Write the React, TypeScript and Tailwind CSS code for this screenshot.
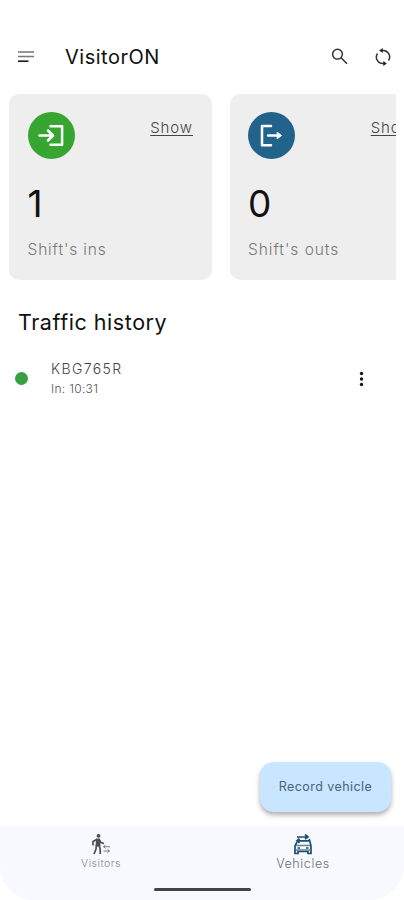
import { useState } from "react";
import type { ReactNode } from "react";

type Entry = { plate: string; time: string };

const entries: Entry[] = [{ plate: "KBG765R", time: "10:31" }];

export default function App() {
  const [tab, setTab] = useState("vehicles");

  return (
    <main className="flex h-[900px] w-[404px] flex-col overflow-hidden bg-white font-['Inter',sans-serif] text-[#111]">
      <header className="mt-[37px] flex h-10 items-center pr-3 pl-[18px]">
        <button aria-label="Menu">
          <MenuIcon />
        </button>
        <h1 className="ml-[31px] text-[20px] leading-10 tracking-[0.5px]">VisitorON</h1>
        <button aria-label="Search" className="ml-auto">
          <SearchIcon />
        </button>
        <button aria-label="Refresh" className="ml-[25px]">
          <SyncIcon />
        </button>
      </header>

      <section className="mt-[17px] mr-2 ml-[9px] flex gap-[18px] overflow-hidden">
        <StatCard label="Shift's ins" value={1} color="bg-[#36a631]" tracking="tracking-[0.85px]">
          <path d="M22.500 14.200h11.600v18.600H22.500M11.500 23.500h13M20 18.500l5 5-5 5" />
        </StatCard>
        <StatCard label="Shift's outs" value={0} color="bg-[#22638c]" tracking="tracking-[0.95px]">
          <path d="M23 14h-9v19.200h9M20 23.500h10" />
          <path d="M29.500 20.500L33.500 23.500l-4 3z" fill="currentColor" strokeWidth="1" />
        </StatCard>
      </section>

      <section className="mt-[26px]">
        <h2 className="pl-[18px] text-[21.5px] leading-8 tracking-[0.55px]">Traffic history</h2>
        <ul className="mt-[21px]">
          {entries.map((entry) => (
            <li key={entry.plate} className="flex h-10 items-center pr-[38px] pl-[15px]">
              <span className="h-[13px] w-[13px] rounded-full bg-[#37a041]" />
              <div className="ml-[23px] flex flex-col pt-px">
                <span className="text-[14px] leading-5 font-light tracking-[1.4px] text-[#444]">
                  {entry.plate}
                </span>
                <span className="text-[12px] leading-5 font-light tracking-[0.3px] text-[#555]">
                  In: {entry.time}
                </span>
              </div>
              <button aria-label="More" className="ml-auto">
                <MoreIcon />
              </button>
            </li>
          ))}
        </ul>
      </section>

      <button className="mt-auto mr-[13px] mb-[14px] h-[50px] w-[131px] shrink-0 self-end rounded-[14px] bg-[#c8e6ff] text-[12.5px] tracking-[0.45px] text-[#48637a] shadow-[0_3px_5px_rgba(0,0,0,0.32)]">
        Record vehicle
      </button>

      <nav className="flex h-[74px] shrink-0 flex-col items-center rounded-b-[34px] bg-[#f7f9ff]">
        <div className="grid w-full grid-cols-2">
          <NavItem label="Visitors" active={tab === "visitors"} onClick={() => setTab("visitors")}>
            <WalkIcon />
          </NavItem>
          <NavItem label="Vehicles" active={tab === "vehicles"} onClick={() => setTab("vehicles")}>
            <CarIcon />
          </NavItem>
        </div>
        <div className="mt-[16px] h-[3px] w-[97px] rounded-full bg-[#424347]" />
      </nav>
    </main>
  );
}

function StatCard({
  label,
  value,
  color,
  tracking,
  children,
}: {
  label: string;
  value: number;
  color: string;
  tracking: string;
  children: ReactNode;
}) {
  return (
    <article className="h-[185.500px] w-[202.500px] shrink-0 rounded-[10px] bg-[#eee] px-[18.500px] pt-[18px]">
      <div className="flex items-start justify-between">
        <div className={`h-[47px] w-[47px] rounded-full text-white ${color}`}>
          <svg width="47" height="47" viewBox="0 0 47 47" fill="none" stroke="currentColor" strokeWidth="2.500" strokeLinejoin="round" strokeLinecap="round">
            {children}
          </svg>
        </div>
        <a href="#" className="mt-1.5 text-[15px] leading-5 font-light tracking-[0.9px] text-[#444] underline underline-offset-2">
          Show
        </a>
      </div>
      <p className="mt-[25px] text-[37px] leading-10 font-normal">{value}</p>
      <p className={`mt-[16px] text-[15.500px] leading-5 font-light text-[#777] ${tracking}`}>{label}</p>
    </article>
  );
}

function NavItem({
  label,
  active,
  onClick,
  children,
}: {
  label: string;
  active: boolean;
  onClick: () => void;
  children: ReactNode;
}) {
  return (
    <button onClick={onClick} className="flex flex-col items-center pt-[7px]">
      {children}
      <span
        className={`mt-px leading-4 font-light ${
          active ? "text-[12.500px] tracking-[0.6px] text-[#68707a]" : "text-[10.500px] tracking-[0.5px] text-[#858991]"
        }`}
      >
        {label}
      </span>
    </button>
  );
}

function MenuIcon() {
  return (
    <svg width="16" height="12" viewBox="0 0 16 12" fill="none" strokeWidth="1.5">
      <path d="M0 1h16M0 5.500h16" stroke="#777" />
      <path d="M0 10.200h10.500" stroke="#222" strokeWidth="1.700" />
    </svg>
  );
}

function SearchIcon() {
  return (
    <svg width="18" height="18" viewBox="0 0 18 18" fill="none" stroke="#333" strokeWidth="1.500">
      <circle cx="6.500" cy="6.200" r="4.900" />
      <path d="M10 9.800L16 15.800" />
    </svg>
  );
}

function SyncIcon() {
  return (
    <svg width="18" height="18" viewBox="0 0 18 18" fill="none" stroke="#333" strokeWidth="1.500">
      <path d="M8 2.500A6.500 6.500 0 0 1 14.500 12.500M10 15.500A6.500 6.500 0 0 1 3.500 5.500" />
      <path d="M8.700 0v5L5.200 2.500zM9.300 13v5L12.800 15.500z" fill="#222" stroke="none" />
    </svg>
  );
}

function MoreIcon() {
  return (
    <svg width="9" height="16" viewBox="0 0 9 16" fill="#161616">
      <circle cx="4.500" cy="2.500" r="1.700" />
      <circle cx="4.500" cy="8" r="1.700" />
      <circle cx="4.500" cy="13.500" r="1.700" />
    </svg>
  );
}

function WalkIcon() {
  return (
    <svg width="20" height="22" viewBox="0 0 20 22" fill="none" stroke="#4b4f54" strokeWidth="1.700">
      <circle cx="7.500" cy="2.800" r="1.900" fill="#4b4f54" stroke="none" />
      <path d="M5 5.500h4l.5 8H4.500z" fill="#4b4f54" stroke="none" />
      <path d="M5.500 6.500L2 8.500v4M8 6.500l2 3 3 1M5.500 12l-.5 4-2 5M8 12l1.200 4v5" />
      <path d="M12.500 13.700h6.500M12.500 18h6M14.500 12l-2 1.700 2 1.600M16.500 16.400l2 1.600-2 1.700" stroke="#777c83" strokeWidth="1" />
    </svg>
  );
}

function CarIcon() {
  return (
    <svg width="20" height="22" viewBox="0 0 20 22" fill="none" stroke="#1d4e70" strokeWidth="1.700">
      <path d="M4 4h10M12 1.500l3 2.500-3 2M16 7.800H5M6.500 5.500L4 7.800l2.500 2" />
      <path d="M4 9l-2 4v7.500h3v-2h10v2h3V13l-1.700-7" />
      <path d="M3 12.500h14M3 17h14" stroke="#62849d" strokeWidth="1.300" />
      <path d="M4.500 15H7M13 15h2.500" />
    </svg>
  );
}
